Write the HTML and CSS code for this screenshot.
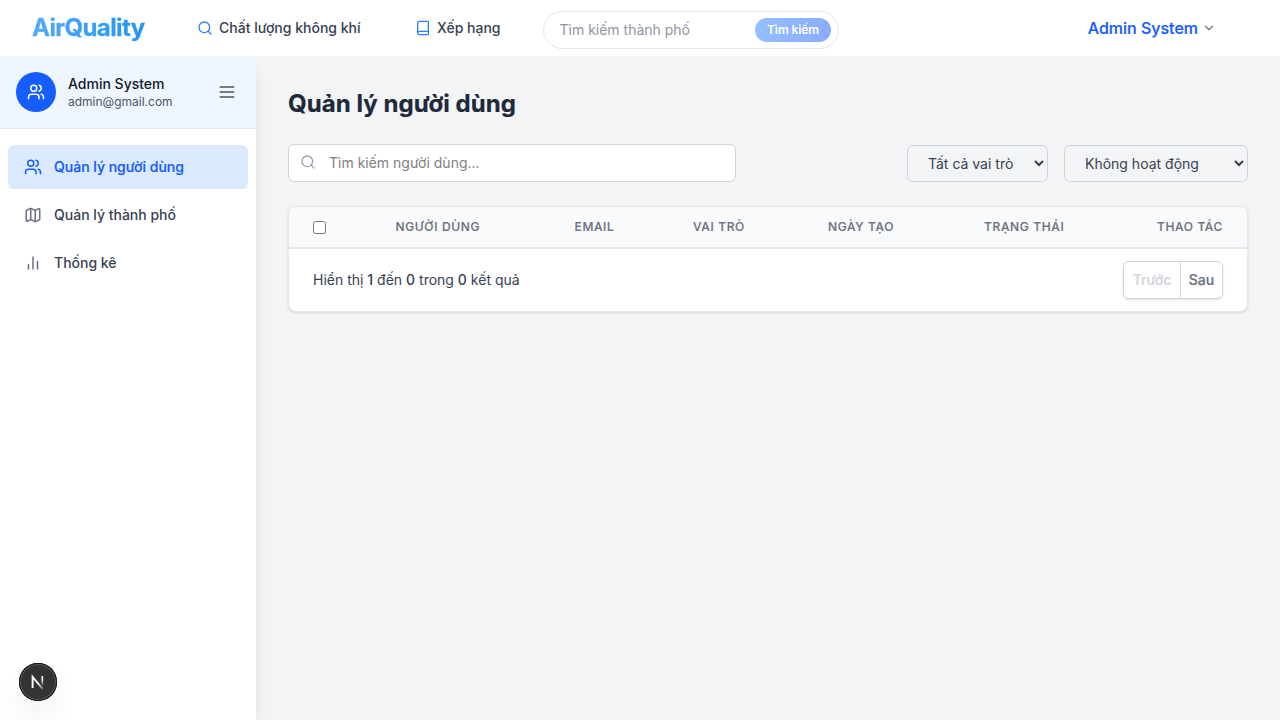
FILE: index.html
```html
<!DOCTYPE html>
<html lang="vi">
<head>
<meta charset="utf-8">
<title>AirQuality</title>
<link rel="stylesheet" href="styles.css">
</head>
<body>
<header class="topbar">
  <a class="logo">AirQuality</a>
  <a class="nav-link nav-air"><svg class="icon" width="16" height="16" viewBox="0 0 24 24"><circle cx="11" cy="11" r="8"/><path d="m21 21-4.3-4.3"/></svg><span>Chất lượng không khí</span></a>
  <a class="nav-link nav-rank"><svg class="icon" width="16" height="16" viewBox="0 0 24 24"><path d="M4 19.5v-15A2.5 2.5 0 0 1 6.5 2H19a1 1 0 0 1 1 1v18a1 1 0 0 1-1 1H6.500a1 1 0 0 1 0-5H20"/></svg><span>Xếp hạng</span></a>
  <form class="city-search">
    <input class="city-input" type="text" placeholder="Tìm kiếm thành phố">
    <button class="city-button" type="button">Tìm kiếm</button>
  </form>
  <div class="account"><span>Admin System</span><svg class="icon chevron" width="14" height="14" viewBox="0 0 24 24"><path d="m6 9 6 6 6-6"/></svg></div>
</header>
<div class="shell">
  <aside class="sidebar">
    <div class="profile">
      <div class="avatar"><svg class="icon" width="18" height="18" viewBox="0 0 24 24"><path d="M16 21v-2a4 4 0 0 0-4-4H6a4 4 0 0 0-4 4v2"/><circle cx="9" cy="7" r="4"/><path d="M22 21v-2a4 4 0 0 0-3-3.870M16 3.130a4 4 0 0 1 0 7.750"/></svg></div>
      <div class="profile-text"><div class="profile-name">Admin System</div><div class="profile-mail">admin@gmail.com</div></div>
      <svg class="icon menu-icon" width="20" height="20" viewBox="0 0 24 24"><path d="M4 6h16M4 12h16M4 18h16"/></svg>
    </div>
    <nav class="side-nav">
      <a class="side-link active"><svg class="icon" width="18" height="18" viewBox="0 0 24 24"><path d="M16 21v-2a4 4 0 0 0-4-4H6a4 4 0 0 0-4 4v2"/><circle cx="9" cy="7" r="4"/><path d="M22 21v-2a4 4 0 0 0-3-3.870M16 3.130a4 4 0 0 1 0 7.750"/></svg><span>Quản lý người dùng</span></a>
      <a class="side-link"><svg class="icon" width="18" height="18" viewBox="0 0 24 24"><path d="M14.106 5.553a2 2 0 0 0 1.788 0l3.659-1.830A1 1 0 0 1 21 4.619v12.764a1 1 0 0 1-.553.894l-4.553 2.277a2 2 0 0 1-1.788 0l-4.212-2.106a2 2 0 0 0-1.788 0l-3.659 1.830A1 1 0 0 1 3 19.381V6.618a1 1 0 0 1 .553-.894l4.553-2.277a2 2 0 0 1 1.788 0z"/><path d="M15 5.764v15M9 3.236v15"/></svg><span>Quản lý thành phố</span></a>
      <a class="side-link"><svg class="icon" width="18" height="18" viewBox="0 0 24 24"><path d="M18 20V10M12 20V4M6 20v-6"/></svg><span>Thống kê</span></a>
    </nav>
  </aside>
  <main class="content">
    <h1 class="title">Quản lý người dùng</h1>
    <div class="filters">
      <label class="user-search"><svg class="icon" width="16" height="16" viewBox="0 0 24 24"><circle cx="11" cy="11" r="8"/><path d="m21 21-4.300-4.300"/></svg><input class="user-input" type="text" placeholder="Tìm kiếm người dùng..."></label>
      <select class="select role"><option>Tất cả vai trò</option></select>
      <select class="select status"><option>Không hoạt động</option></select>
    </div>
    <section class="card">
      <div class="table-head">
        <div class="cell"><input class="check" type="checkbox"></div>
        <div class="cell">Người dùng</div>
        <div class="cell">Email</div>
        <div class="cell">Vai trò</div>
        <div class="cell">Ngày tạo</div>
        <div class="cell">Trạng thái</div>
        <div class="cell last">Thao tác</div>
      </div>
      <div class="table-foot">
        <p class="summary">Hiển thị <b>1</b> đến <b>0</b> trong <b>0</b> kết quả</p>
        <div class="pager"><button class="page-button prev" type="button" disabled>Trước</button><button class="page-button next" type="button">Sau</button></div>
      </div>
    </section>
  </main>
</div>
<div class="dev-badge">
  <svg width="38" height="38" viewBox="0 0 38 38" fill="none">
    <defs>
      <linearGradient id="stem" x1="0" y1="13" x2="0" y2="25" gradientUnits="userSpaceOnUse"><stop offset=".3" stop-color="#fff"/><stop offset=".85" stop-color="#fff" stop-opacity="0"/></linearGradient>
      <linearGradient id="diag" x1="20" y1="20" x2="25" y2="26" gradientUnits="userSpaceOnUse"><stop stop-color="#fff"/><stop offset="1" stop-color="#fff" stop-opacity=".2"/></linearGradient>
    </defs>
    <path d="M13.600 25V13.800L23.700 26" stroke="url(#diag)" stroke-width="1.900"/>
    <path d="M23.300 13v11" stroke="url(#stem)" stroke-width="1.700"/>
  </svg>
</div>
</body>
</html>
```
FILE: styles.css
```css
* { box-sizing: border-box; }
body { margin: 0; height: 720px; overflow: hidden; display: flex; flex-direction: column; background: #f3f4f6; color: #364153; font: 14px/20px Inter, sans-serif; }
input, button, select { font: inherit; color: inherit; }
.icon { display: block; flex: none; fill: none; stroke: currentColor; stroke-width: 2; stroke-linecap: round; stroke-linejoin: round; }
.topbar { height: 56px; flex: none; display: flex; align-items: center; padding: 0 64px 0 32px; background: #fff; }
.logo { width: 165px; font-size: 24px; line-height: 32px; font-weight: 700; letter-spacing: -0.6px; -webkit-text-stroke: 0.3px transparent; color: transparent; background: linear-gradient(90deg, #51a8fb, #2196f3 113px); background-clip: text; -webkit-background-clip: text; }
.nav-link { display: flex; align-items: center; gap: 6px; font-weight: 500; white-space: nowrap; }
.nav-link .icon { color: #2b7fff; }
.nav-air { width: 218px; }
.nav-rank { width: 128px; }
.city-search { width: 296px; height: 38px; margin: 4px 0 0; display: flex; align-items: center; padding: 0 7px 0 15.5px; border: 1px solid #e5e7eb; border-radius: 19px; }
.city-input { flex: 1; min-width: 0; padding: 0; border: 0; background: none; }
.city-input::placeholder { color: #90959f; }
.city-button { width: 76px; height: 24px; padding: 0; border: 0; border-radius: 12px; color: #fff; font-size: 12px; line-height: 16px; font-weight: 600; letter-spacing: -0.1px; background: linear-gradient(90deg, #95bfff, #8aacff); }
.account { margin-left: auto; display: flex; align-items: center; gap: 4px; font-size: 16px; line-height: 24px; font-weight: 500; color: #155dfc; -webkit-text-stroke: 0.2px #155dfc; }
.chevron { color: #6a7282; }
.shell { flex: 1; display: flex; min-height: 0; }
.sidebar { width: 256px; flex: none; background: #fff; box-shadow: 0 10px 15px -3px rgba(0,0,0,.1), 0 4px 6px -4px rgba(0,0,0,.1); clip-path: inset(0 -30px 0 0); }
.profile { height: 73px; display: flex; align-items: center; padding: 0 19px 0 16px; border-bottom: 1px solid #e5e7eb; background: #eff6ff; }
.avatar { width: 40px; height: 40px; margin-right: 12px; display: grid; place-items: center; border-radius: 50%; color: #fff; background: #155dfc; }
.profile-text { flex: 1; }
.profile-name { line-height: 20px; font-weight: 500; color: #101828; }
.profile-mail { font-size: 12px; line-height: 16px; color: #4a5565; }
.menu-icon { color: #4a5565; }
.side-nav { display: flex; flex-direction: column; gap: 4px; padding: 16px 8px; }
.side-link { height: 44px; display: flex; align-items: center; gap: 12px; padding: 0 16px; border-radius: 6px; font-weight: 500; }
.side-link .icon { color: #6a7282; }
.side-link.active, .side-link.active .icon { color: #155dfc; }
.side-link.active { background: #dbeafe; -webkit-text-stroke: 0.2px #155dfc; }
.content { flex: 1; padding: 32px; }
.title { margin: 0 0 24px; font-size: 24px; line-height: 32px; font-weight: 700; letter-spacing: 0.07px; color: #1e2939; -webkit-text-stroke: 0.2px #1e2939; }
.filters { display: flex; align-items: flex-end; margin-bottom: 24px; }
.user-search { width: 448px; height: 38px; display: flex; align-items: center; gap: 13px; margin-right: auto; padding: 0 12px 0 11px; border: 1px solid #d1d5dc; border-radius: 6px; background: #fff; }
.user-search .icon { color: #99a1af; margin-top: -2px; }
.user-input { flex: 1; padding: 0; border: 0; background: none; }
.user-input::placeholder { color: #808080; }
.select { height: 37px; padding: 0 0 0 16px; border: 1px solid #d1d5dc; border-radius: 6px; background: transparent; }
.role { width: 141px; margin-right: 16px; }
.status { width: 184px; }
.card { height: 106px; border: 1px solid #e5e7eb; border-radius: 8px; background: #fff; overflow: hidden; box-shadow: 0 1px 3px rgba(0,0,0,.1), 0 1px 2px -1px rgba(0,0,0,.1); }
.table-head { height: 42px; display: grid; grid-template-columns: 82.5px 179px 118.5px 135px 156px 1fr 1fr; align-items: center; border-bottom: 2px solid #e5e7eb; background: #f9fafb; }
.cell { padding-left: 24px; font-size: 12px; line-height: 16px; font-weight: 500; letter-spacing: .64px; text-transform: uppercase; color: #6a7282; white-space: nowrap; -webkit-text-stroke: 0.15px #6a7282; }
.cell.last { padding: 0 24px 0 0; text-align: right; }
.check { display: block; width: 13px; height: 13px; margin: 1px 0 0; }
.table-foot { height: 62px; display: flex; align-items: center; justify-content: space-between; padding: 0 24px; }
.summary { margin: 0; }
.summary b { font-weight: 500; }
.pager { display: flex; border-radius: 6px; box-shadow: 0 1px 3px rgba(0,0,0,.1), 0 1px 2px -1px rgba(0,0,0,.1); }
.page-button { height: 38px; padding: 0; border: 1px solid #d1d5dc; background: #fff; font-weight: 500; color: #6a7282; -webkit-text-stroke: 0.2px; }
.prev { width: 58px; border-radius: 6px 0 0 6px; color: #d1d5dc; }
.next { width: 43px; margin-left: -1px; border-radius: 0 6px 6px 0; }
.dev-badge { position: fixed; left: 19px; top: 663px; width: 38px; height: 38px; border-radius: 50%; background: #333; box-shadow: inset 0 0 0 1px #111, inset 0 0 0 2px #5a5a5a, 0 16px 32px -8px rgba(0,0,0,.16); }
.dev-badge svg { display: block; }
```
